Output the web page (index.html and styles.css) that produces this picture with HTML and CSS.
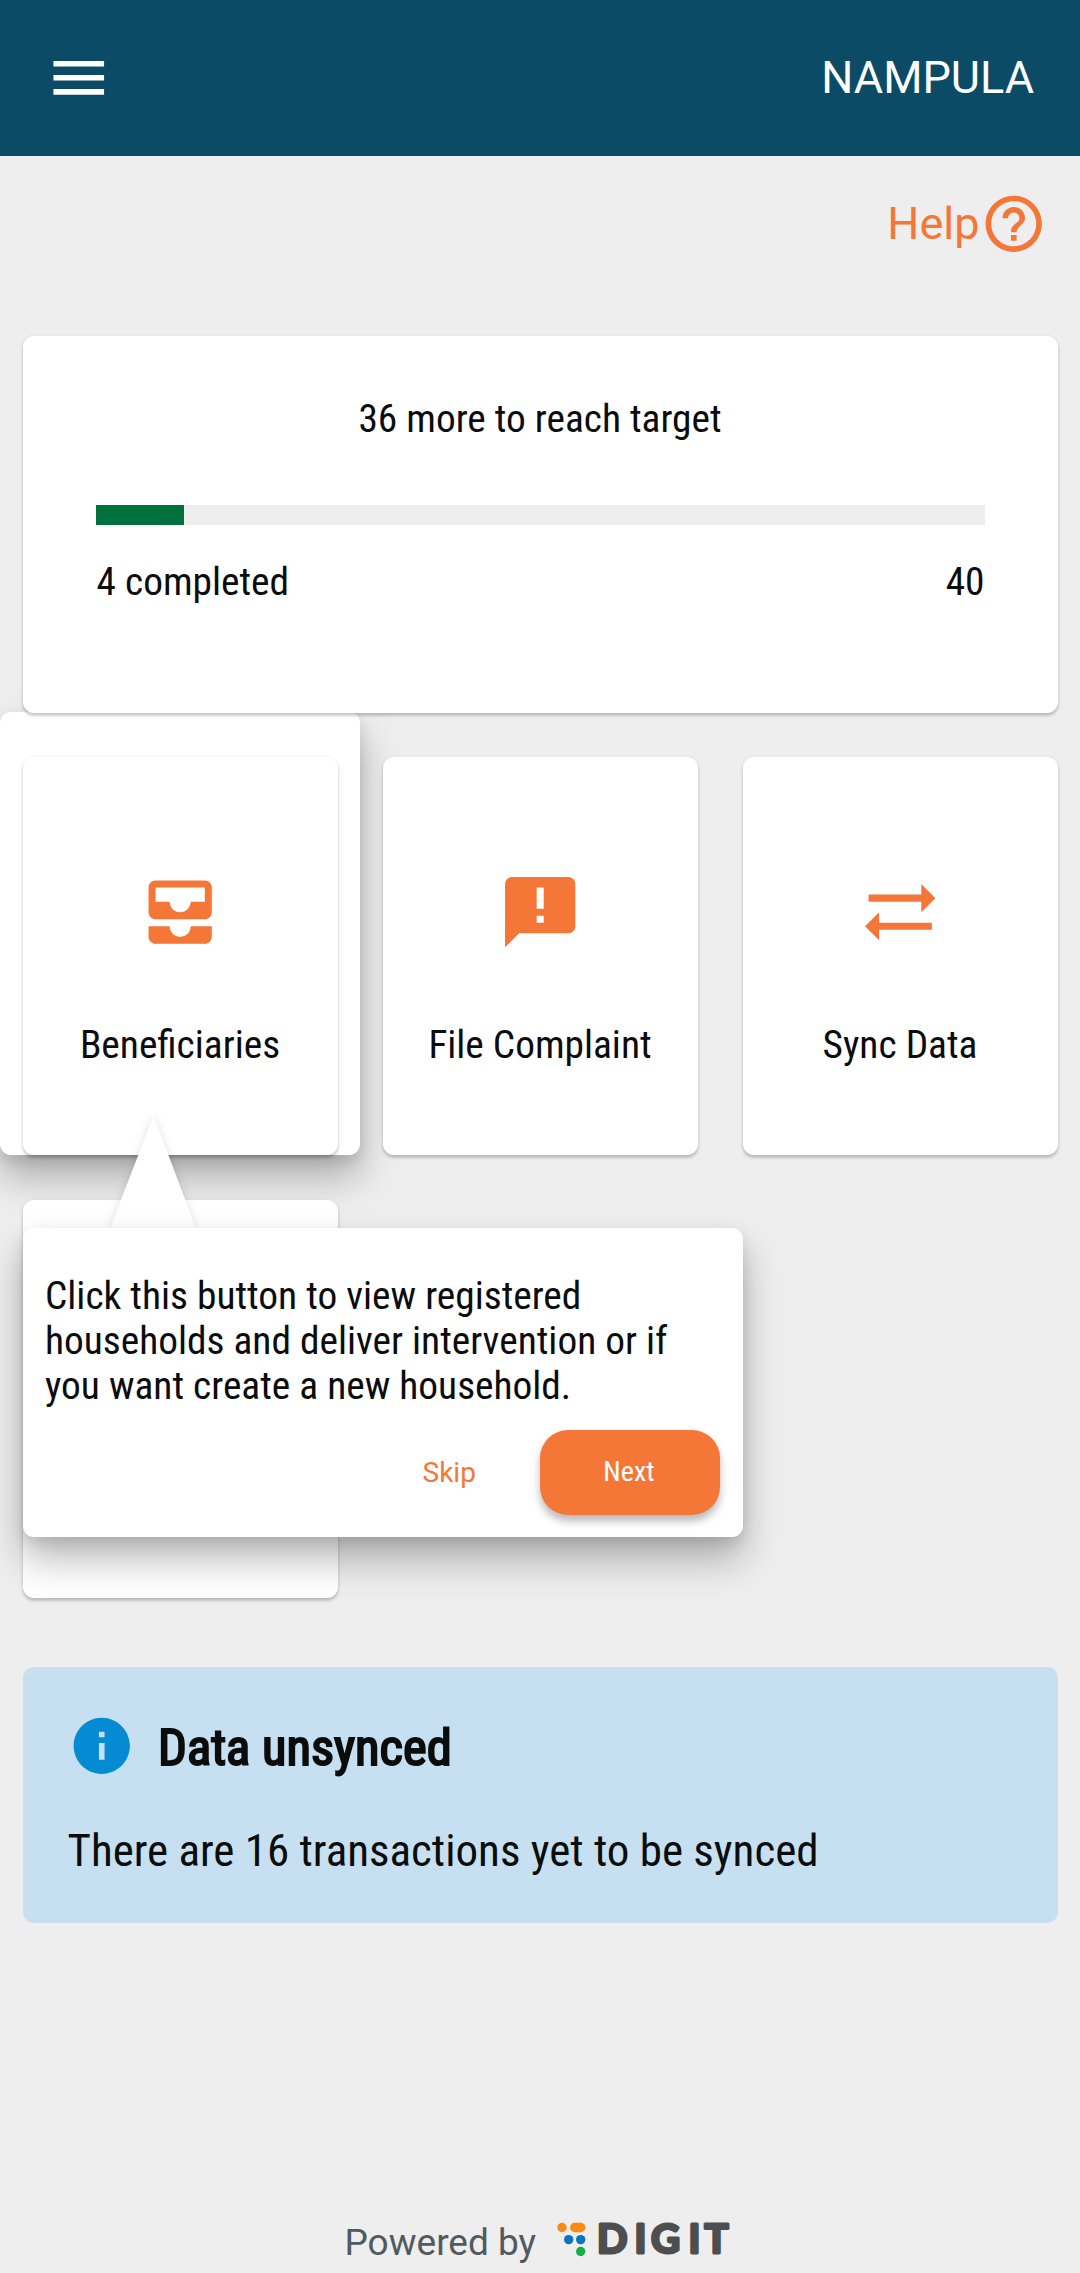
FILE: index.html
```html
<!DOCTYPE html>
<html lang="en">
<head>
<meta charset="utf-8">
<title>Home</title>
<link rel="stylesheet" href="styles.css">
</head>
<body>
<header class="topbar">
  <svg class="menu" viewBox="0 0 24 24"><path d="M3 18h18v-2H3v2zm0-5h18v-2H3v2zm0-7v2h18V6H3z"/></svg>
  <span class="district">NAMPULA</span>
</header>
<main class="content">
  <div class="help">
    <span>Help</span>
    <svg viewBox="0 0 24 24"><path d="M11 18h2v-2h-2v2zm1-16C6.48 2 2 6.48 2 12s4.48 10 10 10 10-4.48 10-10S17.52 2 12 2zm0 18c-4.41 0-8-3.59-8-8s3.59-8 8-8 8 3.59 8 8-3.59 8-8 8zm0-14c-2.21 0-4 1.79-4 4h2c0-1.1.9-2 2-2s2 .9 2 2c0 2-3 1.75-3 5h2c0-2.25 3-2.5 3-5 0-2.21-1.79-4-4-4z"/></svg>
  </div>
  <section class="card summary">
    <p class="goal">36 more to reach target</p>
    <div class="bar"><div class="fill" style="width:10%"></div></div>
    <div class="counts"><span class="done">4 completed</span><span>40</span></div>
  </section>
  <section class="tiles">
    <div class="slot highlighted">
      <div class="card tile">
        <svg viewBox="0 0 24 24"><path d="M19 3H5c-1.100 0-2 .9-2 2v7c0 1.100.9 2 2 2h14c1.100 0 2-.9 2-2V5c0-1.100-.9-2-2-2zm0 6h-4c0 1.620-1.380 3-3 3s-3-1.380-3-3H5V5h14v4zm-4 7h6v3c0 1.100-.9 2-2 2H5c-1.100 0-2-.9-2-2v-3h6c0 1.660 1.340 3 3 3s3-1.340 3-3z"/></svg>
        <span>Beneficiaries</span>
      </div>
    </div>
    <div class="slot">
      <div class="card tile">
        <svg viewBox="0 0 24 24"><path d="M20 2H4c-1.100 0-1.990.9-1.990 2L2 22l4-4h14c1.100 0 2-.9 2-2V4c0-1.100-.9-2-2-2zm-7 9h-2V5h2v6zm0 4h-2v-2h2v2z"/></svg>
        <span>File Complaint</span>
      </div>
    </div>
    <div class="slot">
      <div class="card tile">
        <svg viewBox="0 0 24 24"><path d="M22 8l-4-4v3H3v2h15v3l4-4zM2 16l4 4v-3h15v-2H6v-3l-4 4z"/></svg>
        <span>Sync Data</span>
      </div>
    </div>
    <div class="slot"><div class="card tile"></div></div>
  </section>
  <aside class="coach">
    <svg class="pointer" viewBox="0 0 86 113"><path d="M43.500 0L86 113H0z"/></svg>
    <div class="bubble">
      <p>Click this button to view registered<br>households and deliver intervention or if<br>you want create a new household.</p>
      <div class="actions"><span class="skip">Skip</span><span class="next">Next</span></div>
    </div>
  </aside>
  <section class="notice">
    <div class="notice-head">
      <svg viewBox="0 0 24 24"><path d="M12 2C6.480 2 2 6.480 2 12s4.480 10 10 10 10-4.480 10-10S17.520 2 12 2zm1 15h-2v-6h2v6zm0-8h-2V7h2v2z"/></svg>
      <h2>Data unsynced</h2>
    </div>
    <p class="notice-text">There are 16 transactions yet to be synced</p>
  </section>
</main>
<footer class="footer">
  <span class="powered">Powered by</span>
  <svg class="logo" viewBox="0 -12 190 60">
    <g fill="#f98b14"><circle cx="6" cy="6.500" r="4.700"/><rect x="14" y="1.800" width="15.500" height="9.400" rx="4.700"/></g>
    <g fill="#0a76bd"><circle cx="12.700" cy="18.600" r="4.700"/><circle cx="24.700" cy="18.600" r="4.700"/></g>
    <circle cx="24.700" cy="30.500" r="4.700" fill="#12b045"/>
    <text class="wordmark" x="41 78.500 95 132.500 148.500" y="32.300">DIGIT</text>
  </svg>
</footer>
</body>
</html>
```
FILE: styles.css
```css
* { box-sizing: border-box; }
html, body { margin: 0; }
body {
  width: 1080px;
  height: 2273px;
  display: flex;
  flex-direction: column;
  overflow: hidden;
  background: #eeeeee;
  color: #0b0c0c;
  font-family: "Roboto Condensed", Roboto, sans-serif;
  font-stretch: 75%;
  font-size: 39.375px;
  line-height: 45px;
}
p, h2 { margin: 0; font-weight: 400; }
span { white-space: nowrap; }
svg { display: block; flex: none; fill: #f47738; }

.topbar {
  height: 155.500px;
  flex: none;
  display: flex;
  align-items: center;
  justify-content: space-between;
  padding: 0 46px 0 45px;
  background: #0b4b66;
  color: #fff;
}
.menu { width: 67.500px; height: 67.500px; fill: #fff; }
.district, .help { font-family: Roboto, sans-serif; font-stretch: 100%; font-size: 45px; line-height: 53px; }

.content { position: relative; isolation: isolate; padding: 0 22.500px; }
.help {
  height: 180.500px;
  display: flex;
  justify-content: flex-end;
  padding: 34.500px 10.500px 0 0;
  color: #f47738;
}
.help span { margin-top: 7px; }
.help svg { width: 67.500px; height: 67.500px; }

.card {
  background: #fff;
  border-radius: 11px;
  box-shadow: 0 3px 3px rgba(0,0,0,.16), 0 1px 4px rgba(0,0,0,.1);
}
.summary { height: 377px; padding: 60px 73px 0; }
.goal { text-align: center; }
.bar { height: 20px; margin-top: 64px; background: #eeeeee; }
.fill { height: 100%; background: #00703c; }
.counts { display: flex; justify-content: space-between; margin-top: 34px; }
.done { margin-left: 1px; }

.tiles { display: grid; grid-template-columns: repeat(3, 360px); margin: -1px -22.500px 0; }
.slot { height: 443px; padding: 45px 22.500px 0; }
.highlighted { position: relative; }
.highlighted::before {
  content: "";
  position: absolute;
  inset: 0;
  z-index: -1;
  border-radius: 11px;
  background: #fff;
  box-shadow: 0 22px 38px rgba(0,0,0,.28), 0 6px 14px rgba(0,0,0,.1);
}
.tile {
  height: 398px;
  display: flex;
  flex-direction: column;
  align-items: center;
  padding-top: 112.500px;
}
.tile svg { width: 84.400px; height: 84.400px; }
.tile span { margin-top: 68px; }

.coach { position: absolute; left: 22.500px; top: 1072.500px; width: 720px; }
.pointer {
  position: absolute;
  left: 87.500px;
  top: -113px;
  width: 86px;
  height: 114px;
  fill: #fff;
  filter: drop-shadow(0 0 4px rgba(0,0,0,.12));
}
.bubble {
  position: relative;
  height: 309px;
  padding: 45px 22.500px 22.500px;
  display: flex;
  flex-direction: column;
  justify-content: space-between;
  border-radius: 11px;
  background: #fff;
  box-shadow: 0 22px 38px rgba(0,0,0,.28), 0 6px 14px rgba(0,0,0,.1);
}
.actions { display: flex; justify-content: flex-end; align-items: center; gap: 64px; font-size: 28.125px; }
.skip { font-family: Roboto, sans-serif; font-stretch: 100%; color: #f47738; }
.next {
  width: 180px;
  height: 84.500px;
  border-radius: 28px;
  line-height: 84.500px;
  text-align: center;
  text-indent: -2px;
  color: #fff;
  background: #f47738;
  box-shadow: 0 6px 9px rgba(0,0,0,.28);
}

.notice {
  height: 256.500px;
  margin-top: 68.500px;
  padding: 45px;
  border-radius: 11px;
  background: #c7e0f1;
}
.notice-head { display: flex; align-items: center; gap: 23px; }
.notice-head svg { width: 67.500px; height: 67.500px; fill: #048bd3; }
h2 { padding-top: 5px; font-size: 50.625px; line-height: 58px; font-weight: 400; -webkit-text-stroke: 2px #0b0c0c; }
.notice-text { margin-top: 44.500px; font-size: 45px; line-height: 53px; white-space: nowrap; }

.footer { margin-top: auto; display: flex; padding-left: 344.500px; height: 55px; color: #505a5f; }
.powered { padding-top: 2px; font-family: Roboto, sans-serif; font-stretch: 100%; font-size: 37px; width: 211.500px; }
.logo { width: 190px; height: 60px; margin-top: -9px; }
.wordmark { font-family: Lato, sans-serif; font-weight: 700; font-stretch: 100%; font-size: 40px; fill: #4d4e50; stroke: #4d4e50; stroke-width: 3px; stroke-linejoin: round; }
```
